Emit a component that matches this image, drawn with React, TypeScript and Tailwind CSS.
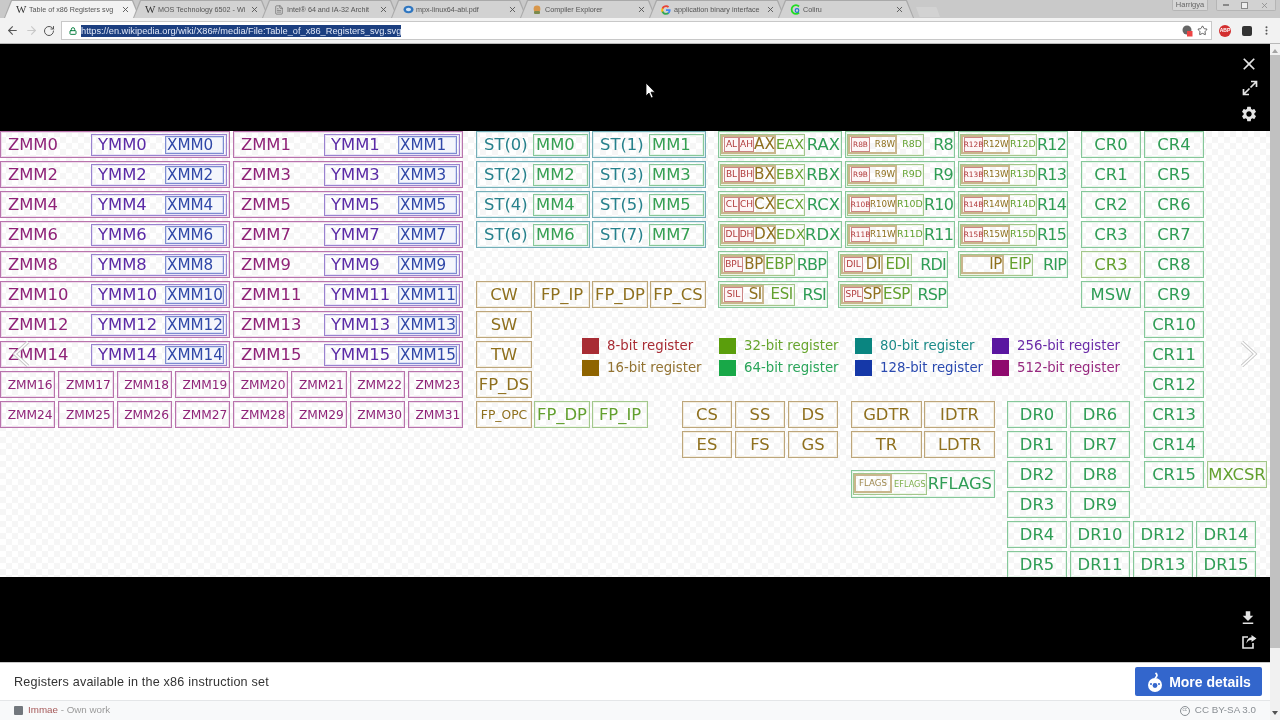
import type { ReactNode } from 'react';
import { ArrowLeft, ArrowRight, FileText, Lock, MoreVertical, RotateCw, Star, X } from 'lucide-react';
import { MdClose, MdFileDownload, MdSettings } from 'react-icons/md';

const TONES = {
  zmm: 'border-[#b873ac] text-[#8f2378] shadow-[inset_0_0_0_1px_#efdcec]',
  ymm: 'border-[#9a82cf] text-[#5a2aa6] shadow-[inset_0_0_0_1px_#e9e4f5]',
  xmm: 'border-[#7d8bd2] text-[#2f47a8] shadow-[inset_0_0_0_1px_#d6dcf3]',
  st: 'border-[#74aeb8] text-[#26818c] shadow-[inset_0_0_0_1px_#e0f0f1]',
  mm: 'border-[#86c799] text-[#35a052] shadow-[inset_0_0_0_1px_#e6f5ea]',
  tan: 'border-[#bda67a] text-[#8f701e] shadow-[inset_0_0_0_1px_#f3ede0]',
  olive: 'border-[#a3c78c] text-[#62a02e] shadow-[inset_0_0_0_1px_#eef6e8]',
  green: 'border-[#86c79a] text-[#2f9d55] shadow-[inset_0_0_0_1px_#e6f5ea]',
};

type Tone = keyof typeof TONES;

function Cell({ tone, w, size = 'text-[16.4px]', children }: { tone: Tone; w: string; size?: string; children: ReactNode }) {
  return (
    <div className={`flex h-[27px] shrink-0 items-center justify-center whitespace-nowrap border pt-px ${TONES[tone]} ${w} ${size}`}>
      {children}
    </div>
  );
}

function ZmmRow({ z, y, x }: { z: string; y: string; x: string }) {
  return (
    <div className={`flex h-[27px] items-center justify-between border pl-[7px] pr-[2px] text-[16.4px] ${TONES.zmm}`}>
      <span className="pt-px">{z}</span>
      <div className={`flex h-[22px] w-[136px] items-center justify-between border pl-[6px] pr-[1px] ${TONES.ymm}`}>
        <span className="pt-px">{y}</span>
        <div className={`mr-px flex h-[18px] w-[59px] items-center border bg-[#f4f6fc] pl-[1px] pt-px text-[15.2px] ${TONES.xmm}`}>{x}</div>
      </div>
    </div>
  );
}

function StCell({ st, mm }: { st: string; mm: string }) {
  return (
    <div className={`flex h-[27px] w-[114px] items-center justify-between border pl-[7px] pr-[1px] text-[16.4px] ${TONES.st}`}>
      <span className="pt-px">{st}</span>
      <div className={`flex h-[22px] w-[55px] items-center border pl-[2px] pt-px ${TONES.mm}`}>{mm}</div>
    </div>
  );
}

interface GprProps {
  outer: string;
  ebox: string;
  wbox: string;
  low?: ReactNode;
  wName: string;
  wSize: string;
  eName: string;
  eSize: string;
  rName: string;
  rSize?: string;
}

function Gpr({ outer, ebox, wbox, low, wName, wSize, eName, eSize, rName, rSize = 'text-[16.4px]' }: GprProps) {
  return (
    <div className={`flex h-[27px] shrink-0 items-center justify-between border pl-[1px] pr-[1px] ${TONES.green} ${outer}`}>
      <div className={`flex h-[22px] items-center justify-between border pr-[1px] ${TONES.olive} ${ebox}`}>
        <div className={`flex h-[19px] items-center justify-between border-2 border-[#c9b68d] pl-[1px] pr-[0px] text-[#8f701e] shadow-none ${wbox}`}>
          <div className="flex items-center">{low}</div>
          <span className={wSize}>{wName}</span>
        </div>
        <span className={`text-[#62a02e] ${eSize}`}>{eName}</span>
      </div>
      <span className={`pt-px ${rSize}`}>{rName}</span>
    </div>
  );
}

function Low({ name, w, size = 'text-[9px]' }: { name: string; w: string; size?: string }) {
  return (
    <div className={`flex h-[15px] items-center justify-center border border-[#cc8585] bg-[#fdf6f6] leading-none text-[#b03a3a] ${w} ${size}`}>
      {name}
    </div>
  );
}

function LegendItem({ swatch, text, label }: { swatch: string; text: string; label: string }) {
  return (
    <div className="flex h-[16px] items-center">
      <div className={`h-[16px] w-[17px] shrink-0 ${swatch}`} />
      <span className={`ml-[8px] whitespace-nowrap text-[13.3px] ${text}`}>{label}</span>
    </div>
  );
}

function Chevron({ left }: { left?: boolean }) {
  return (
    <svg width="18" height="26" viewBox="0 0 18 26" fill="none">
      <path
        d={left ? 'M16 1L3 13l13 12' : 'M2 1l13 12L2 25'}
        stroke="#c9c9c9"
        strokeWidth="3.4"
      />
      <path
        d={left ? 'M16 1L3 13l13 12' : 'M2 1l13 12L2 25'}
        stroke="#fff"
        strokeWidth="1.6"
      />
    </svg>
  );
}

function Diagram() {
  const wide = [
    ['ZMM0', 'YMM0', 'XMM0', 'ZMM1', 'YMM1', 'XMM1'],
    ['ZMM2', 'YMM2', 'XMM2', 'ZMM3', 'YMM3', 'XMM3'],
    ['ZMM4', 'YMM4', 'XMM4', 'ZMM5', 'YMM5', 'XMM5'],
    ['ZMM6', 'YMM6', 'XMM6', 'ZMM7', 'YMM7', 'XMM7'],
    ['ZMM8', 'YMM8', 'XMM8', 'ZMM9', 'YMM9', 'XMM9'],
    ['ZMM10', 'YMM10', 'XMM10', 'ZMM11', 'YMM11', 'XMM11'],
    ['ZMM12', 'YMM12', 'XMM12', 'ZMM13', 'YMM13', 'XMM13'],
    ['ZMM14', 'YMM14', 'XMM14', 'ZMM15', 'YMM15', 'XMM15'],
  ];
  const small = Array.from({ length: 16 }, (_, i) => `ZMM${i + 16}`);

  const lh = (a: string, b: string) => (
    <>
      <Low name={a} w="w-[15px]" />
      <Low name={b} w="w-[15px]" />
    </>
  );
  const b8 = (name: string) => <Low name={name} w="w-[19px]" size="text-[7.4px]" />;
  const r64 = 'text-[16px] tracking-[-0.8px]';
  const low16 = 'text-[15px] tracking-[-0.3px]';

  return (
    <div className="relative h-[446px] overflow-hidden bg-white bg-[conic-gradient(#f6f6f6_25%,#ffffff_0_50%,#f6f6f6_0_75%,#ffffff_0)] bg-[length:12px_12px] font-['DejaVu_Sans',sans-serif]">
      <div className="grid grid-cols-[476px_206px_36px_133px_156px_74px_189px] grid-rows-[repeat(15,27px)] gap-y-[3px]">
        {/* ZMM / YMM / XMM */}
        <div className="col-start-1 row-span-10 row-start-1 flex w-[463px] flex-col gap-y-[3px]">
          <div className="grid grid-cols-2 gap-x-[3px] gap-y-[3px]">
            {wide.map((r) => (
              <div key={r[0]} className="contents">
                <ZmmRow z={r[0]} y={r[1]} x={r[2]} />
                <ZmmRow z={r[3]} y={r[4]} x={r[5]} />
              </div>
            ))}
          </div>
          <div className="grid grid-cols-8 gap-x-[3px] gap-y-[3px]">
            {small.map((n) => (
              <Cell key={n} tone="zmm" w="w-full pl-[5px]" size="text-[12.2px]">{n}</Cell>
            ))}
          </div>
        </div>

        {/* x87 / MMX */}
        <div className="col-span-2 col-start-2 row-span-4 row-start-1 grid grid-cols-[114px_114px] gap-x-[2px] gap-y-[3px]">
          <StCell st="ST(0)" mm="MM0" />
          <StCell st="ST(1)" mm="MM1" />
          <StCell st="ST(2)" mm="MM2" />
          <StCell st="ST(3)" mm="MM3" />
          <StCell st="ST(4)" mm="MM4" />
          <StCell st="ST(5)" mm="MM5" />
          <StCell st="ST(6)" mm="MM6" />
          <StCell st="ST(7)" mm="MM7" />
        </div>

        {/* general purpose */}
        <div className="col-span-3 col-start-4 row-span-6 row-start-1 flex flex-col gap-y-[3px]">
          {[
            ['AL', 'AH', 'AX', 'EAX', 'RAX', 'R8B', 'R8W', 'R8D', 'R8', 'R12B', 'R12W', 'R12D', 'R12'],
            ['BL', 'BH', 'BX', 'EBX', 'RBX', 'R9B', 'R9W', 'R9D', 'R9', 'R13B', 'R13W', 'R13D', 'R13'],
            ['CL', 'CH', 'CX', 'ECX', 'RCX', 'R10B', 'R10W', 'R10D', 'R10', 'R14B', 'R14W', 'R14D', 'R14'],
            ['DL', 'DH', 'DX', 'EDX', 'RDX', 'R11B', 'R11W', 'R11D', 'R11', 'R15B', 'R15W', 'R15D', 'R15'],
          ].map((r) => (
            <div key={r[2]} className="flex gap-x-[3px]">
              <Gpr outer="w-[124px]" ebox="w-[85px]" wbox="w-[55px]" low={lh(r[0], r[1])} wName={r[2]} wSize="text-[15.3px]" eName={r[3]} eSize="text-[14px]" rName={r[4]} />
              <Gpr outer="w-[110px]" ebox="w-[77px]" wbox="w-[49px]" low={b8(r[5])} wName={r[6]} wSize="text-[8.7px]" eName={r[7]} eSize="text-[9.4px]" rName={r[8]} rSize={r64} />
              <Gpr outer="w-[110px]" ebox="w-[77px]" wbox="w-[49px]" low={b8(r[9])} wName={r[10]} wSize="text-[8.7px]" eName={r[11]} eSize="text-[9.4px]" rName={r[12]} rSize={r64} />
            </div>
          ))}
          <div className="flex gap-x-[10px]">
            <Gpr outer="w-[110px]" ebox="w-[75px]" wbox="w-[44px]" low={<Low name="BPL" w="w-[19px]" />} wName="BP" wSize={low16} eName="EBP" eSize={low16} rName="RBP" rSize={r64} />
            <Gpr outer="w-[110px]" ebox="w-[72px]" wbox="w-[42px]" low={<Low name="DIL" w="w-[19px]" />} wName="DI" wSize={low16} eName="EDI" eSize={low16} rName="RDI" rSize={r64} />
            <Gpr outer="w-[110px]" ebox="w-[73px]" wbox="w-[43px]" wName="IP" wSize={low16} eName="EIP" eSize={low16} rName="RIP" rSize={r64} />
          </div>
          <div className="flex gap-x-[10px]">
            <Gpr outer="w-[110px]" ebox="w-[75px]" wbox="w-[43px]" low={<Low name="SIL" w="w-[19px]" />} wName="SI" wSize={low16} eName="ESI" eSize={low16} rName="RSI" rSize={r64} />
            <Gpr outer="w-[110px]" ebox="w-[72px]" wbox="w-[42px]" low={<Low name="SPL" w="w-[19px]" />} wName="SP" wSize={low16} eName="ESP" eSize={low16} rName="RSP" rSize={r64} />
          </div>
        </div>

        {/* control registers */}
        <div className="col-start-7 row-span-12 row-start-1 grid grid-cols-[60px_60px_60px] grid-rows-[repeat(12,27px)] gap-x-[3px] gap-y-[3px]">
          <Cell tone="green" w="w-[60px]">CR0</Cell>
          <Cell tone="green" w="w-[60px]">CR4</Cell>
          <div />
          <Cell tone="green" w="w-[60px]">CR1</Cell>
          <Cell tone="green" w="w-[60px]">CR5</Cell>
          <div />
          <Cell tone="green" w="w-[60px]">CR2</Cell>
          <Cell tone="green" w="w-[60px]">CR6</Cell>
          <div />
          <Cell tone="green" w="w-[60px]">CR3</Cell>
          <Cell tone="green" w="w-[60px]">CR7</Cell>
          <div />
          <Cell tone="olive" w="w-[60px]">CR3</Cell>
          <Cell tone="green" w="w-[60px]">CR8</Cell>
          <div />
          <Cell tone="green" w="w-[60px]">MSW</Cell>
          <Cell tone="green" w="w-[60px]">CR9</Cell>
          <div />
          {['CR10', 'CR11', 'CR12', 'CR13', 'CR14'].map((n) => (
            <div key={n} className="contents">
              <div />
              <Cell tone="green" w="w-[60px]">{n}</Cell>
              <div />
            </div>
          ))}
          <div />
          <Cell tone="green" w="w-[60px]">CR15</Cell>
          <Cell tone="olive" w="w-[60px]">MXCSR</Cell>
        </div>

        {/* FPU state */}
        <div className="col-span-2 col-start-2 row-span-5 row-start-6 grid grid-cols-[56px_56px_56px_56px] grid-rows-[repeat(5,27px)] gap-x-[2px] gap-y-[3px]">
          <Cell tone="tan" w="w-[56px]">CW</Cell>
          <Cell tone="tan" w="w-[56px]">FP_IP</Cell>
          <Cell tone="tan" w="w-[56px]">FP_DP</Cell>
          <Cell tone="tan" w="w-[56px]">FP_CS</Cell>
          <div className="col-start-1"><Cell tone="tan" w="w-[56px]">SW</Cell></div>
          <div className="col-start-1"><Cell tone="tan" w="w-[56px]">TW</Cell></div>
          <div className="col-start-1"><Cell tone="tan" w="w-[56px]">FP_DS</Cell></div>
          <div className="col-start-1"><Cell tone="tan" w="w-[56px]" size="text-[12.3px]">FP_OPC</Cell></div>
          <Cell tone="olive" w="w-[56px]">FP_DP</Cell>
          <Cell tone="olive" w="w-[56px]">FP_IP</Cell>
        </div>

        {/* legend */}
        <div className="col-span-6 col-start-2 row-span-2 row-start-7 ml-[106px] mt-[27px] flex">
          <div className="flex w-[137px] shrink-0 flex-col gap-y-[6px]">
            <LegendItem swatch="bg-[#a82c34]" text="text-[#a82c34]" label="8-bit register" />
            <LegendItem swatch="bg-[#8f6400]" text="text-[#937332]" label="16-bit register" />
          </div>
          <div className="flex w-[136px] shrink-0 flex-col gap-y-[6px]">
            <LegendItem swatch="bg-[#5a9e0c]" text="text-[#67a52e]" label="32-bit register" />
            <LegendItem swatch="bg-[#18a848]" text="text-[#2aa55a]" label="64-bit register" />
          </div>
          <div className="flex w-[137px] shrink-0 flex-col gap-y-[6px]">
            <LegendItem swatch="bg-[#0a8580]" text="text-[#1a8a88]" label="80-bit register" />
            <LegendItem swatch="bg-[#1538a8]" text="text-[#2a4ab0]" label="128-bit register" />
          </div>
          <div className="flex shrink-0 flex-col gap-y-[6px]">
            <LegendItem swatch="bg-[#5a16a0]" text="text-[#6a2aa8]" label="256-bit register" />
            <LegendItem swatch="bg-[#8f0a6e]" text="text-[#982a80]" label="512-bit register" />
          </div>
        </div>

        {/* segment registers */}
        <div className="col-span-2 col-start-3 row-span-2 row-start-10 grid grid-cols-[50px_50px_50px] gap-x-[3px] gap-y-[3px]">
          {['CS', 'SS', 'DS', 'ES', 'FS', 'GS'].map((n) => (
            <Cell key={n} tone="tan" w="w-[50px]">{n}</Cell>
          ))}
        </div>

        {/* descriptor tables, flags */}
        <div className="col-start-5 row-span-3 row-start-10 flex w-[144px] flex-col gap-y-[3px]">
          <div className="grid grid-cols-[71px_71px] gap-x-[2px] gap-y-[3px]">
            <Cell tone="tan" w="w-[71px]">GDTR</Cell>
            <Cell tone="tan" w="w-[71px]">IDTR</Cell>
            <Cell tone="tan" w="w-[71px]">TR</Cell>
            <Cell tone="tan" w="w-[71px]">LDTR</Cell>
          </div>
          <div className={`mt-[9px] flex h-[28px] items-center justify-between border pl-[1px] pr-[1px] ${TONES.green}`}>
            <div className={`flex h-[22px] w-[74px] items-center border ${TONES.olive}`}>
              <div className="flex h-[19px] w-[38px] items-center justify-center border-2 border-[#c9b68d] text-[8.6px] text-[#a08a50]">FLAGS</div>
              <span className="ml-[2px] text-[8.2px] text-[#7fb04e]">EFLAGS</span>
            </div>
            <span className="pr-[1px] pt-px text-[16.4px]">RFLAGS</span>
          </div>
        </div>

        {/* debug registers */}
        <div className="col-span-2 col-start-6 row-span-6 row-start-10 grid grid-cols-[60px_60px_60px_60px] grid-rows-[repeat(6,27px)] gap-x-[3px] gap-y-[3px]">
          {['DR0', 'DR6', 'DR1', 'DR7', 'DR2', 'DR8', 'DR3', 'DR9'].map((n, i) => (
            <div key={n} className={i % 2 === 0 ? 'col-start-1' : 'col-start-2'}>
              <Cell tone="green" w="w-[60px]">{n}</Cell>
            </div>
          ))}
          <div className="col-start-1"><Cell tone="green" w="w-[60px]">DR4</Cell></div>
          <Cell tone="green" w="w-[60px]">DR10</Cell>
          <Cell tone="green" w="w-[60px]">DR12</Cell>
          <Cell tone="green" w="w-[60px]">DR14</Cell>
          <div className="col-start-1"><Cell tone="green" w="w-[60px]">DR5</Cell></div>
          <Cell tone="green" w="w-[60px]">DR11</Cell>
          <Cell tone="green" w="w-[60px]">DR13</Cell>
          <Cell tone="green" w="w-[60px]">DR15</Cell>
        </div>
      </div>

      {/* nav arrows sit on top of the picture */}
      <div className="absolute left-[12px] top-[210px]"><Chevron left /></div>
      <div className="absolute left-[1240px] top-[210px]"><Chevron /></div>
    </div>
  );
}

function WikiIcon() {
  return <span className="w-[10px] font-['Liberation_Serif',serif] text-[11px] leading-none text-[#333]">W</span>;
}

function GoogleIcon() {
  return (
    <svg width="10" height="10" viewBox="0 0 24 24">
      <path d="M23 12.3c0-.9-.1-1.600-.2-2.300H12v4.400h6.200c-.3 1.400-1.100 2.600-2.300 3.400v2.800h3.700c2.100-2 3.400-4.900 3.400-8.300z" fill="#4285F4" />
      <path d="M12 23.500c3.100 0 5.700-1 7.600-2.800l-3.700-2.900c-1 .7-2.300 1.100-3.900 1.100-3 0-5.500-2-6.400-4.700H1.800v2.900c1.900 3.800 5.800 6.400 10.200 6.400z" fill="#34A853" />
      <path d="M5.600 14.200c-.5-1.400-.5-3 0-4.400V6.900H1.800c-1.600 3.200-1.600 7 0 10.200z" fill="#FBBC05" />
      <path d="M12 5c1.700 0 3.200.6 4.400 1.700l3.300-3.300C17.700 1.600 15.100.5 12 .5 7.600.5 3.700 3.100 1.800 6.900l3.800 2.900C6.500 7 9 5 12 5z" fill="#EA4335" />
    </svg>
  );
}

const TABS: { title: string; icon: ReactNode; active?: boolean }[] = [
  { title: 'Table of x86 Registers svg', icon: <WikiIcon />, active: true },
  { title: 'MOS Technology 6502 - Wi', icon: <WikiIcon /> },
  { title: 'Intel® 64 and IA-32 Archit', icon: <FileText size={10} strokeWidth={1.4} className="text-[#555]" /> },
  {
    title: 'mpx-linux64-abi.pdf',
    icon: (
      <svg width="11" height="9" viewBox="0 0 11 9">
        <ellipse cx="5.500" cy="4.500" rx="5" ry="3.800" fill="#2f76c0" />
        <ellipse cx="5.500" cy="4.500" rx="2.600" ry="1.800" fill="#cfe2f5" />
      </svg>
    ),
  },
  {
    title: 'Compiler Explorer',
    icon: (
      <svg width="10" height="10" viewBox="0 0 10 10">
        <circle cx="5" cy="4" r="3.400" fill="#d8964a" />
        <rect x="2" y="6" width="6" height="3" rx="1" fill="#7b8a4c" />
      </svg>
    ),
  },
  { title: 'application binary interface', icon: <GoogleIcon /> },
  {
    title: 'Coliru',
    icon: (
      <svg width="11" height="11" viewBox="0 0 11 11">
        <path d="M9 2.500A4.300 4.300 0 1 0 9 8.500" fill="none" stroke="#22dd22" strokeWidth="1.800" />
        <circle cx="7" cy="6.500" r="1.800" fill="none" stroke="#2277cc" strokeWidth="1.200" />
      </svg>
    ),
  },
];

function Tab({ title, icon, active }: { title: string; icon: ReactNode; active?: boolean }) {
  return (
    <div className="-mr-[7px] h-[18px] w-[136px] shrink-0 bg-[#a9a9a9] px-[1px] pt-[1px] [clip-path:polygon(0_100%,7px_0,calc(100%-7px)_0,100%_100%)]">
      <div className={`flex h-[17px] items-center pl-[11px] pr-[9px] [clip-path:polygon(0_100%,7px_0,calc(100%-7px)_0,100%_100%)] ${active ? 'bg-[#f2f2f2]' : 'bg-[#d2d2d2]'}`}>
        <div className="flex w-[13px] shrink-0 items-center">{icon}</div>
        <span className="min-w-0 flex-1 whitespace-nowrap text-[7.2px] leading-none text-[#555]">{title}</span>
        <X size={9} strokeWidth={2.4} className="ml-[4px] shrink-0 text-[#555]" />
      </div>
    </div>
  );
}

function BrowserChrome() {
  return (
    <div className="h-[44px] shrink-0 font-['Liberation_Sans',sans-serif]">
      <div className="flex h-[18px] items-end justify-between bg-[#c9c9c9] pl-[4px] pr-[4px]">
        <div className="flex items-end">
          {TABS.map((t) => (
            <Tab key={t.title} {...t} />
          ))}
          <div className="mb-[1px] ml-[9px] h-[10px] w-[24px] bg-[#d2d2d2] [clip-path:polygon(0_0,85%_0,100%_100%,15%_100%)]" />
        </div>
        <div className="flex self-start">
          <div className="mr-[8px] flex h-[11px] w-[36px] items-center justify-center rounded-b-[2px] border border-t-0 border-[#b5b5b5] bg-[#d6d6d6] text-[7.5px] leading-none text-[#666]">Harrigya</div>
          <div className="flex h-[11px] w-[60px] items-center justify-around rounded-b-[2px] border border-t-0 border-[#b5b5b5] bg-[#d2d2d2] text-[#888]">
            <div className="h-[2px] w-[6px] border border-[#888] bg-[#eee]" />
            <div className="h-[7px] w-[7px] border border-[#888] bg-[#eee]" />
            <X size={9} strokeWidth={2} />
          </div>
        </div>
      </div>
      <div className="flex h-[26px] items-center border-b border-[#b8b8b8] bg-[#f2f2f2]">
        <div className="flex w-[61px] items-center pl-[6px] text-[#555]">
          <ArrowLeft size={13} strokeWidth={2} />
          <ArrowRight size={13} strokeWidth={2} className="ml-[6px] text-[#c8c8c8]" />
          <RotateCw size={12} strokeWidth={2} className="ml-[5px]" />
        </div>
        <div className="flex h-[19px] w-[1151px] items-center border border-[#c8c8c8] bg-white pl-[7px]">
          <Lock size={8} strokeWidth={3} className="text-[#0b8043]" />
          <span className="ml-[4px] whitespace-nowrap bg-[#1c3f80] text-[9.25px] leading-[12px] text-[#dfe6f5]">
            https://en.wikipedia.org/wiki/X86#/media/File:Table_of_x86_Registers_svg.svg
          </span>
          <div className="ml-auto flex items-center pr-[3px]">
            <svg width="11" height="12" viewBox="0 0 11 12">
              <circle cx="5" cy="5" r="4.500" fill="#666" />
              <rect x="5" y="6" width="5.500" height="5.500" fill="#e44" />
            </svg>
            <Star size={11} strokeWidth={1.800} className="ml-[4px] text-[#444]" />
          </div>
        </div>
        <div className="flex flex-1 items-center pl-[7px]">
          <div className="flex h-[12px] w-[12px] items-center justify-center rounded-full bg-[#d32f2f] text-[5px] font-bold leading-none text-white">ABP</div>
          <div className="ml-[11px] h-[10px] w-[10px] rounded-[2px] bg-[#333]" />
          <MoreVertical size={11} strokeWidth={2.4} className="ml-[9px] text-[#555]" />
        </div>
      </div>
    </div>
  );
}

function Scrollbar() {
  return (
    <div className="flex w-[10px] shrink-0 flex-col items-center bg-[#f1f1f1]">
      <div className="mt-[5px] h-0 w-0 border-x-[3px] border-b-[4px] border-x-transparent border-b-[#a3a3a3]" />
      <div className="mt-[2px] h-[593px] w-full bg-[#c1c1c1]" />
      <div className="mb-[5px] mt-auto h-0 w-0 border-x-[3px] border-t-[4px] border-x-transparent border-t-[#505050]" />
    </div>
  );
}

export default function App() {
  return (
    <div className="relative flex h-[720px] w-[1280px] flex-col overflow-hidden bg-white blur-[0.4px]">
      <BrowserChrome />
      <div className="flex min-h-0 flex-1">
        <div className="flex min-w-0 flex-1 flex-col">
          <div className="flex h-[87px] flex-col items-end bg-black pr-[12px] pt-[10px] text-[#e4e4e4]">
            <MdClose size={20} className="-mr-[1px]" />
            <svg width="16" height="16" viewBox="0 0 16 16" fill="none" stroke="currentColor" strokeWidth="1.700" className="mt-[6px]">
              <path d="M9 1.500h5.500V7M14.500 1.500l-6 6M7 14.500H1.500V9M1.500 14.500l6-6" />
            </svg>
            <MdSettings size={18} className="mt-[9px]" />
          </div>
          <Diagram />
          <div className="flex h-[85px] flex-col items-end bg-black pr-[13px] pt-[32px] text-[#e4e4e4]">
            <MdFileDownload size={18} />
            <svg width="15" height="14" viewBox="0 0 15 14" fill="none" className="mt-[8px]">
              <path d="M6 2H1v11h10V8" stroke="currentColor" strokeWidth="1.600" />
              <path d="M9.500 0l5 3.500-5 3.500V5C7 5 5.500 6 4.500 8.500 4.500 5 6.500 2.500 9.500 2.200z" fill="currentColor" />
            </svg>
          </div>
          <div className="flex h-[38px] items-center justify-between border-t border-[#c8c8c8] bg-white pl-[14px] pr-[8px] font-['Liberation_Sans',sans-serif]">
            <span className="pt-[1px] text-[12.600px] tracking-[0.2px] text-[#333]">Registers available in the x86 instruction set</span>
            <div className="flex h-[29px] w-[127px] items-center justify-center rounded-[2px] bg-[#3366cc] pt-[1px] text-[14px] font-bold text-white">
              <svg width="18" height="21" viewBox="0 0 18 21" className="mr-[5px]">
                <circle cx="9" cy="13" r="7" fill="#fff" />
                <circle cx="9" cy="13.500" r="2.400" fill="#3366cc" />
                <circle cx="5" cy="12" r="1" fill="#3366cc" />
                <circle cx="13" cy="12" r="1" fill="#3366cc" />
                <path d="M9 6c2.500-1.500 2.500-3.500 .5-5" fill="none" stroke="#fff" strokeWidth="1.800" />
              </svg>
              More details
            </div>
          </div>
          <div className="flex h-[20px] items-center justify-between border-t border-[#e4e6e8] bg-[#f8f9fa] pl-[14px] pr-[14px] font-['Liberation_Sans',sans-serif] text-[9.800px]">
            <div className="flex items-center">
              <div className="mr-[5px] h-[9px] w-[9px] rounded-[1px] bg-[#72777d]" />
              <span className="text-[#a55858]">Immae</span>
              <span className="text-[#9a9a9a]">&nbsp;- Own work</span>
            </div>
            <div className="flex items-center text-[#8a8f94]">
              <div className="mr-[5px] flex h-[10px] w-[10px] items-center justify-center rounded-full border border-[#8a8f94] text-[4.500px] leading-none">cc</div>
              CC BY-SA 3.0
            </div>
          </div>
        </div>
        <Scrollbar />
      </div>

      {/* mouse pointer from the screen capture */}
      <svg width="10" height="17" viewBox="0 0 10 17" className="absolute left-[645px] top-[82px]">
        <path d="M1 1v13l3-3 2.200 5 2-1-2.200-4.800h4z" fill="#fff" stroke="#000" strokeWidth="0.800" />
      </svg>
    </div>
  );
}
